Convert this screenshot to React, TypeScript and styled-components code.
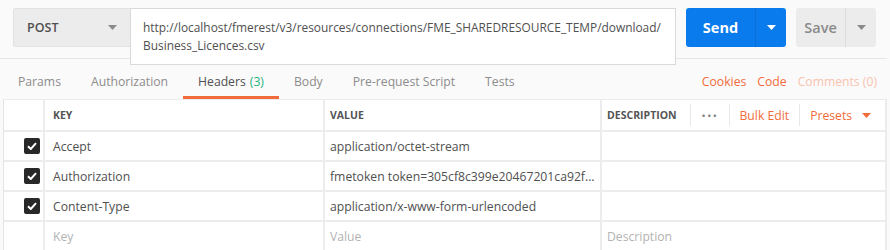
import React from "react";
import styled, {createGlobalStyle} from "styled-components";

const GlobalStyle = createGlobalStyle`
    body {
        margin: 0;
        background-color: #fafafa;
        font-family: "Open Sans", "Noto Sans", sans-serif;
        color: #505050;
    }
`

type Header = { key: string; value: string };

const headers: Header[] = [
    {key: "Accept", value: "application/octet-stream"},
    {key: "Authorization", value: "fmetoken token=305cf8c399e20467201ca92f..."},
    {key: "Content-Type", value: "application/x-www-form-urlencoded"},
];

const tabs = [
    {label: "Params"},
    {label: "Authorization"},
    {label: "Headers", count: 3, active: true},
    {label: "Body"},
    {label: "Pre-request Script"},
    {label: "Tests"},
];

const Caret = ({color}: { color: string }) => (
    <svg width="9" height="5" viewBox="0 0 9 5">
        <path d="M0 0 H9 L4.5 5 Z" fill={color}/>
    </svg>
);

const Check = () => (
    <svg width="10" height="8" viewBox="0 0 10 8">
        <path d="M1 4.2 L3.8 7 L9 1.2" stroke="#fff" strokeWidth="2" fill="none"/>
    </svg>
);

const App = () => {
    return (
        <main>
            <GlobalStyle/>
            <Panel>
                <RequestBar>
                    <MethodSelect>
                        POST
                        <Caret color="#8a8a8a"/>
                    </MethodSelect>
                    <UrlBox>
                        http://localhost/fmerest/v3/resources/connections/FME_SHAREDRESOURCE_TEMP/download/
                        <br/>
                        Business_Licences.csv
                    </UrlBox>
                    <SplitButton $primary>
                        <ButtonMain>Send</ButtonMain>
                        <ButtonDrop><Caret color="#fff"/></ButtonDrop>
                    </SplitButton>
                    <SplitButton>
                        <ButtonMain>Save</ButtonMain>
                        <ButtonDrop><Caret color="#8a8a8a"/></ButtonDrop>
                    </SplitButton>
                </RequestBar>

                <TabBar>
                    {tabs.map(t => (
                        <Tab key={t.label} $active={!!t.active}>
                            {t.label}
                            {t.count !== undefined && <Count>({t.count})</Count>}
                        </Tab>
                    ))}
                    <TabLinks>
                        <TabLink>Cookies</TabLink>
                        <TabLink>Code</TabLink>
                        <TabLink $muted>Comments (0)</TabLink>
                    </TabLinks>
                </TabBar>

                <Table>
                    <Cell/>
                    <HeadCell $pad={8}>Key</HeadCell>
                    <HeadCell $pad={5}>Value</HeadCell>
                    <HeadCell $pad={5}>
                        Description
                        <Actions>
                            <Sep/>
                            <Dots>•••</Dots>
                            <Sep/>
                            <Action>Bulk Edit</Action>
                            <Sep/>
                            <Action>Presets <Caret color="#f26b3a"/></Action>
                        </Actions>
                    </HeadCell>

                    {headers.map(h => (
                        <React.Fragment key={h.key}>
                            <CheckCell><CheckBox><Check/></CheckBox></CheckCell>
                            <Cell $pad={8}>{h.key}</Cell>
                            <Cell $pad={5}>{h.value}</Cell>
                            <Cell/>
                        </React.Fragment>
                    ))}

                    <Cell/>
                    <Cell $pad={8} $placeholder>Key</Cell>
                    <Cell $pad={5} $placeholder>Value</Cell>
                    <Cell $pad={5} $placeholder>Description</Cell>
                </Table>
            </Panel>
        </main>
    );
};

const Panel = styled.div`
    width: 887px;
`

const RequestBar = styled.div`
    display: flex;
    align-items: flex-start;
    height: 50px;
    padding: 8px 0 0 13px;
    border-bottom: 1px solid #e6e6e6;
`

const MethodSelect = styled.div`
    display: flex;
    align-items: center;
    justify-content: space-between;
    box-sizing: border-box;
    width: 117px;
    height: 39px;
    padding: 0 13px 0 13px;
    background-color: #ececec;
    border: 1px solid #e2e2e2;
    border-right: none;
    border-radius: 3px 0 0 3px;
    font-size: 12.5px;
    font-weight: 600;
    color: #505050;
`

const UrlBox = styled.div`
    position: relative;
    z-index: 1;
    box-sizing: border-box;
    width: 546px;
    height: 57px;
    padding: 9px 10px 0 12px;
    background-color: #fff;
    border: 1px solid #d9d9d9;
    font-size: 11.9px;
    line-height: 18px;
    color: #505050;
    white-space: nowrap;
    overflow: hidden;
`

const SplitButton = styled.div<{ $primary?: boolean }>`
    display: flex;
    height: 39px;
    width: ${p => p.$primary ? "100px" : "80px"};
    margin-left: 10px;
    border-radius: 3px;
    background-color: ${p => p.$primary ? "#097bed" : "#ececec"};
    color: ${p => p.$primary ? "#fff" : "#8a8a8a"};
    --sep: ${p => p.$primary ? "#0a6fd8" : "#dcdcdc"};
    font-size: 14.5px;
    font-weight: ${p => p.$primary ? 700 : 600};
`

const ButtonMain = styled.div`
    flex: 1;
    display: flex;
    align-items: center;
    justify-content: center;
`

const ButtonDrop = styled.div`
    width: 30px;
    display: flex;
    align-items: center;
    justify-content: center;
    border-left: 1px solid var(--sep);
`

const TabBar = styled.div`
    display: flex;
    height: 40px;
    padding-left: 3px;
`

const Tab = styled.div<{ $active: boolean }>`
    display: flex;
    align-items: center;
    box-sizing: border-box;
    padding: 8px 15px 0 15px;
    border-bottom: 3px solid ${p => p.$active ? "#f26b3a" : "transparent"};
    font-size: 12.2px;
    color: ${p => p.$active ? "#505050" : "#8c8c8c"};
    white-space: nowrap;
`

const Count = styled.span`
    margin-left: 4px;
    color: #26b47f;
`

const TabLinks = styled.div`
    display: flex;
    align-items: center;
    gap: 11px;
    margin-left: auto;
    padding: 8px 10px 3px 0;
    font-size: 12.2px;
`

const TabLink = styled.span<{ $muted?: boolean }>`
    color: ${p => p.$muted ? "#f8c3ae" : "#f26b3a"};
`

const Table = styled.div`
    display: grid;
    grid-template-columns: 39px 278px 275px 283px;
    grid-auto-rows: 28px;
    grid-template-rows: 30px;
    gap: 2px;
    margin-left: 3px;
    width: 884px;
    background-color: #ececec;
    border-top: 1px solid #ececec;
    border-left: 1px solid #e4e4e4;
    border-right: 2px solid #ececec;
    box-sizing: border-box;
`

const Cell = styled.div<{ $pad?: number; $placeholder?: boolean }>`
    display: flex;
    align-items: center;
    padding-left: ${p => p.$pad ?? 0}px;
    background-color: #fff;
    font-size: 12.2px;
    color: ${p => p.$placeholder ? "#b3b3b3" : "#505050"};
    white-space: nowrap;
    overflow: hidden;
`

const HeadCell = styled(Cell)`
    font-size: 10.5px;
    font-weight: 700;
    text-transform: uppercase;
    color: #555;
`

const CheckCell = styled(Cell)`
    justify-content: flex-end;
    padding-right: 3px;
`

const CheckBox = styled.div`
    display: flex;
    align-items: center;
    justify-content: center;
    width: 16px;
    height: 16px;
    border-radius: 2px;
    background-color: #282828;
`

const Actions = styled.div`
    display: flex;
    align-items: center;
    height: 100%;
    margin-left: 13px;
    text-transform: none;
    font-weight: 400;
`

const Sep = styled.div`
    width: 1px;
    height: 22px;
    background-color: #e8e8e8;
`

const Dots = styled.span`
    padding: 0 10px 0 11px;
    font-size: 11px;
    letter-spacing: 1.5px;
    color: #808080;
`

const Action = styled.span`
    display: flex;
    align-items: center;
    gap: 10px;
    padding: 0 10px;
    font-size: 12.2px;
    color: #f26b3a;
`

export default App;
